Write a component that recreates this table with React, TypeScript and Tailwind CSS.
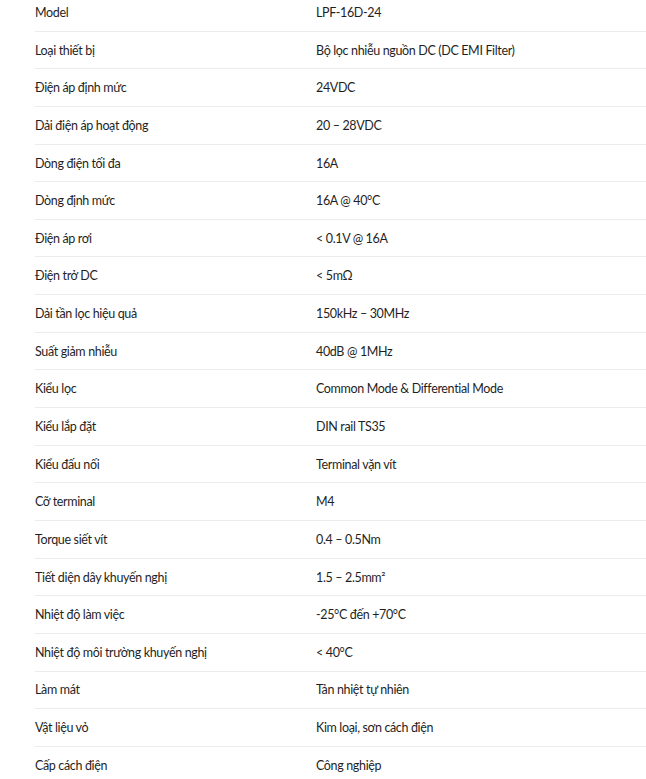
import React from 'react';

const specs: [string, React.ReactNode][] = [
  ['Model', 'LPF-16D-24'],
  ['Loại thiết bị', 'Bộ lọc nhiễu nguồn DC (DC EMI Filter)'],
  ['Điện áp định mức', '24VDC'],
  ['Dải điện áp hoạt động', '20 – 28VDC'],
  ['Dòng điện tối đa', '16A'],
  ['Dòng định mức', '16A @ 40°C'],
  ['Điện áp rơi', '< 0.1V @ 16A'],
  ['Điện trở DC', '< 5mΩ'],
  ['Dải tần lọc hiệu quả', '150kHz – 30MHz'],
  ['Suất giảm nhiễu', '40dB @ 1MHz'],
  ['Kiểu lọc', 'Common Mode & Differential Mode'],
  ['Kiểu lắp đặt', 'DIN rail TS35'],
  ['Kiểu đấu nối', 'Terminal vặn vít'],
  ['Cỡ terminal', 'M4'],
  ['Torque siết vít', '0.4 – 0.5Nm'],
  ['Tiết diện dây khuyến nghị', '1.5 – 2.5mm²'],
  ['Nhiệt độ làm việc', '-25°C đến +70°C'],
  ['Nhiệt độ môi trường khuyến nghị', '< 40°C'],
  ['Làm mát', 'Tản nhiệt tự nhiên'],
  ['Vật liệu vỏ', 'Kim loại, sơn cách điện'],
  ['Cấp cách điện', 'Công nghiệp'],
];

export default function App() {
  return (
    <div className="w-[646px] h-[779px] overflow-hidden bg-white text-[#1f1f1f] text-[12.5px] tracking-[-0.35px] font-['Lato','Noto_Sans',sans-serif]">
      <div className="ml-[35px] -mt-[6px]">
        {specs.map(([label, value], i) => (
          <div
            key={i}
            className="flex items-center h-[37.65px] pt-[2px] border-b border-[#ececec]"
          >
            <div className="w-[281px] shrink-0">{label}</div>
            <div>{value}</div>
          </div>
        ))}
      </div>
    </div>
  );
}
